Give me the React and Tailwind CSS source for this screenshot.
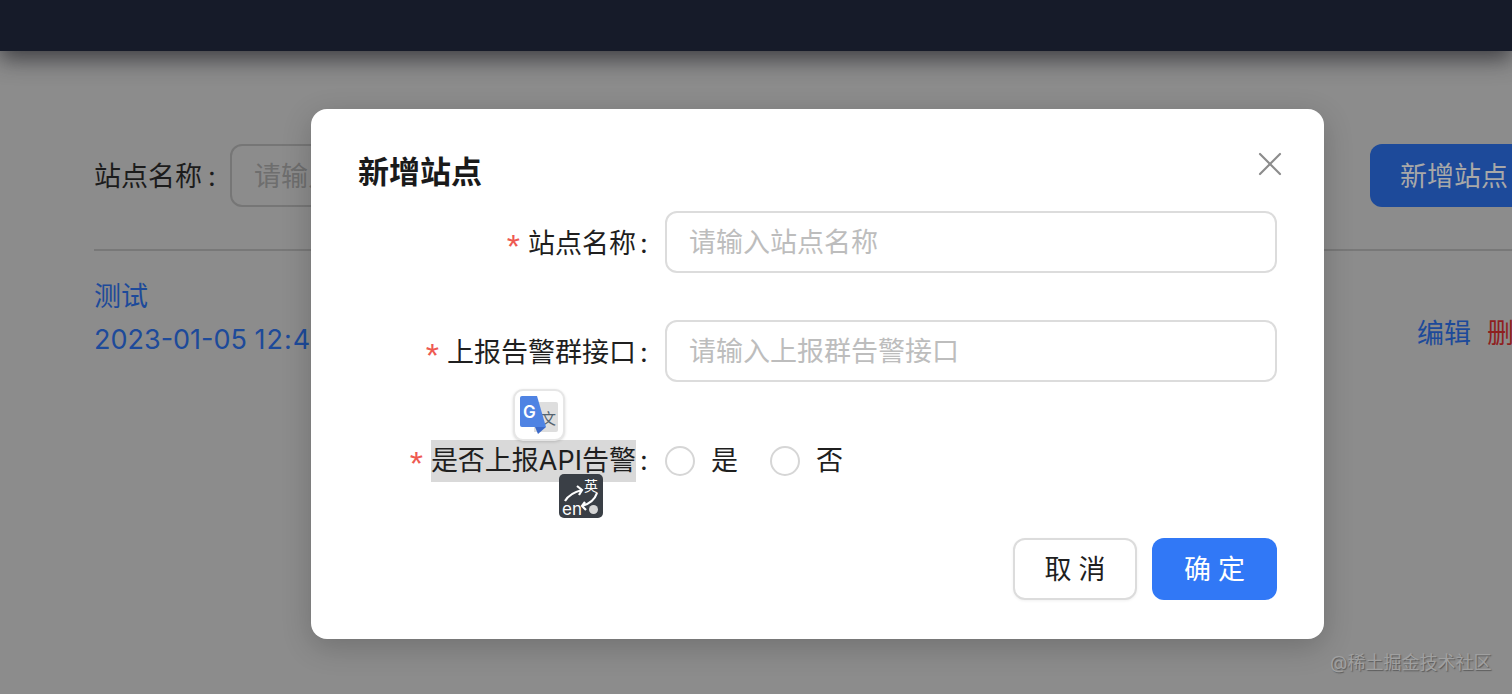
import { X } from "lucide-react";

const font = "font-['Inter','Noto_Sans_CJK_SC',sans-serif]";

function GoogleTranslateIcon() {
  return (
    <div className="absolute left-[202px] top-[280px] z-10 h-[52px] w-[52px] rounded-[10px] border-2 border-[#e6e6e6] bg-white shadow-[0_1px_3px_rgba(0,0,0,0.15)]">
      <div className="absolute left-[19px] top-[11px] flex h-[30px] w-[24px] items-center justify-center rounded-r-[2px] bg-[#dedede] pl-[5px] pt-[3px] text-[15px] leading-none text-[#54636f]">
        文
      </div>
      <svg className="absolute left-[5px] top-[5px]" width="30" height="40" viewBox="0 0 30 40">
        <path d="M2 0h15l9 31H2a2 2 0 0 1-2-2V2a2 2 0 0 1 2-2z" fill="#4f83e3" />
        <path d="M15 31h11l-8 7z" fill="#3b69c9" />
      </svg>
      <span className="absolute left-[8px] top-[11px] text-[17px] font-semibold leading-[20px] text-white">G</span>
    </div>
  );
}

function TranslateEnIcon() {
  return (
    <div className="absolute left-[248px] top-[365px] z-10 h-[44px] w-[44px] rounded-[5px] bg-[#3a3f46] text-white">
      <span className="absolute left-[25px] top-[4px] text-[14px] leading-[15px]">英</span>
      <span className="absolute left-[3px] top-[26px] text-[17px] leading-[18px]">en</span>
      <svg className="absolute left-0 top-0" width="44" height="44" viewBox="0 0 44 44" fill="none" stroke="#fff" strokeWidth="2.200">
        <path d="M6 27c3-5 9-9 17-11M18 12l5 4-3 5" />
        <path d="M38 19c-2 6-8 11-15 13M27 36l-4-4 3-4" />
      </svg>
      <span className="absolute left-[30px] top-[31px] h-[9px] w-[9px] rounded-full bg-[#d5d5d5]" />
    </div>
  );
}

function FieldLabel({ children, nudge }) {
  return (
    <div className={`flex w-[339px] shrink-0 items-center justify-end text-[27px] leading-[42px] text-[#1f1f1f] ${nudge ? "pt-[3px]" : ""}`}>
      <span className="mr-[8px] translate-y-[2px] font-['Liberation_Sans'] text-[34px] leading-none text-[#ee5a52]">*</span>
      {children}
      <span className="ml-[4px] w-[10px]">:</span>
    </div>
  );
}

function TextField({ placeholder }) {
  return (
    <div className="flex h-[62px] w-[612px] items-center rounded-[12px] border-2 border-[#dcdcdc] bg-white px-[22px] pt-[3px] text-[27px] text-[#bdbdbd]">
      {placeholder}
    </div>
  );
}

function Radio({ label }) {
  return (
    <div className="flex items-center gap-[16px] text-[27px] text-[#1f1f1f]">
      <span className="h-[30px] w-[30px] rounded-full border-2 border-[#d6d6d6] bg-white" />
      {label}
    </div>
  );
}

export default function App() {
  return (
    <div className={`relative h-[694px] w-full overflow-hidden bg-[#8c8c8c] ${font}`}>
      <div className="relative z-[1] h-[51px] bg-[#161b29] shadow-[0_8px_22px_rgba(30,30,35,0.7)]" />

      <div className="pl-[94px] pt-[93px]">
        <div className="flex h-[63px] items-center justify-between">
          <div className="flex items-center text-[27px] text-[#1c1c1c]">
            <span className="w-[136px] pt-[3px]">站点名称<span className="ml-[6px]">:</span></span>
            <div className="flex h-[63px] w-[300px] items-center rounded-[12px] border-2 border-[#767676] px-[22px] pt-[3px] text-[#6e6e6e]">请输入</div>
          </div>
          <div className="flex h-[63px] w-[142px] items-center rounded-l-[12px] bg-[#1d4a9a] pl-[30px] pt-[3px] text-[27px] text-[#a8a8a8]">
            新增站点
          </div>
        </div>
        <div className="mt-[42px] h-[2px] bg-[#787878]" />
        <div className="mt-[24px] flex justify-between">
          <div className="text-[27px] leading-[43px] text-[#1d4a9a]">
            <div>测试</div>
            <div>2023-01-05 <span className="tracking-[1px]">12:44</span></div>
          </div>
          <div className="mt-[37px] flex w-[95px] gap-[16px] overflow-hidden whitespace-nowrap text-[27px] leading-[43px]">
            <span className="text-[#1d4a9a]">编辑</span>
            <span className="text-[#8f1f1f]">删除</span>
          </div>
        </div>
      </div>

      <div className="absolute left-[311px] top-[109px] z-[2] h-[530px] w-[1013px] rounded-[16px] bg-white shadow-[0_8px_30px_rgba(0,0,0,0.2)]">
        <X className="absolute right-[34px] top-[35px] text-[#8c8c8c]" size={40} strokeWidth={1.3} />
        <div className="pl-[47px] pt-[43px] text-[31px] font-bold leading-[40px] text-[#1a1a1a]">新增站点</div>

        <div className="mt-[19px] flex items-center gap-[15px]">
          <FieldLabel nudge>站点名称</FieldLabel>
          <TextField placeholder="请输入站点名称" />
        </div>
        <div className="mt-[47px] flex items-center gap-[15px]">
          <FieldLabel nudge>上报告警群接口</FieldLabel>
          <TextField placeholder="请输入上报群告警接口" />
        </div>
        <div className="mt-[48px] flex h-[62px] items-center gap-[15px]">
          <FieldLabel>
            <span className="bg-[#d9d9d9]">是否上报API告警</span>
          </FieldLabel>
          <div className="flex items-center gap-[32px]">
            <Radio label="是" />
            <Radio label="否" />
          </div>
        </div>

        <div className="mr-[47px] mt-[46px] flex justify-end gap-[15px]">
          <div className="flex h-[62px] w-[124px] items-center justify-center rounded-[12px] border-2 border-[#dcdcdc] bg-white pl-[7px] pt-[2px] text-[27px] tracking-[7px] text-[#1f1f1f] shadow-[0_1px_3px_rgba(0,0,0,0.06)]">
            取消
          </div>
          <div className="flex h-[62px] w-[125px] items-center justify-center rounded-[12px] bg-[#3178f6] pl-[7px] pt-[2px] text-[27px] tracking-[7px] text-white">
            确定
          </div>
        </div>

        <GoogleTranslateIcon />
        <TranslateEnIcon />
      </div>

      <div className="absolute left-[1330px] top-[651px] z-[3] text-[18px] leading-[24px] text-[#a0a0a0] [text-shadow:1px_1px_1px_rgba(60,60,60,0.6)]">@稀土掘金技术社区</div>
    </div>
  );
}
